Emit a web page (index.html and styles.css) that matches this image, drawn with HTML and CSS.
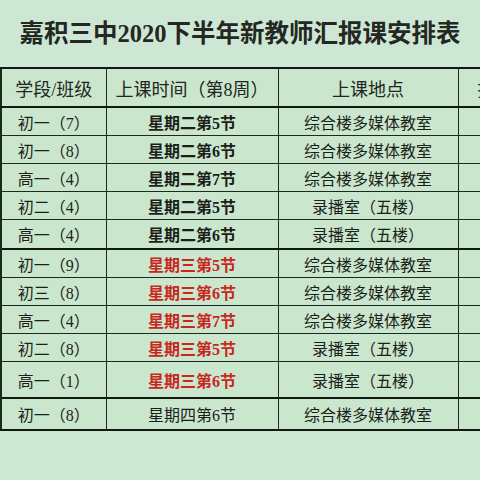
FILE: index.html
```html
<!DOCTYPE html>
<html lang="zh-CN">
<head>
<meta charset="utf-8">
<link rel="stylesheet" href="styles.css">
</head>
<body>
<div class="page">
  <h1 class="title">嘉积三中2020下半年新教师汇报课安排表</h1>
  <table class="sched">
    <colgroup>
      <col class="c1"><col class="c2"><col class="c3"><col class="c4">
    </colgroup>
    <thead>
      <tr class="head">
        <th>学段/班级</th><th>上课时间（第8周）</th><th>上课地点</th><th class="lead">授课教师</th>
      </tr>
    </thead>
    <tbody>
      <tr><td>初一（7）</td><td class="b">星期二第5节</td><td>综合楼多媒体教室</td><td></td></tr>
      <tr><td>初一（8）</td><td class="b">星期二第6节</td><td>综合楼多媒体教室</td><td></td></tr>
      <tr><td>高一（4）</td><td class="b">星期二第7节</td><td>综合楼多媒体教室</td><td></td></tr>
      <tr><td>初二（4）</td><td class="b">星期二第5节</td><td>录播室（五楼）</td><td></td></tr>
      <tr class="r30"><td>高一（4）</td><td class="b">星期二第6节</td><td>录播室（五楼）</td><td></td></tr>
      <tr class="thick"><td>初一（9）</td><td class="b red">星期三第5节</td><td>综合楼多媒体教室</td><td></td></tr>
      <tr><td>初三（8）</td><td class="b red">星期三第6节</td><td>综合楼多媒体教室</td><td></td></tr>
      <tr><td>高一（4）</td><td class="b red">星期三第7节</td><td>综合楼多媒体教室</td><td></td></tr>
      <tr><td>初二（8）</td><td class="b red">星期三第5节</td><td>录播室（五楼）</td><td></td></tr>
      <tr class="tall"><td>高一（1）</td><td class="b red">星期三第6节</td><td>录播室（五楼）</td><td></td></tr>
      <tr class="thick last"><td>初一（8）</td><td>星期四第6节</td><td>综合楼多媒体教室</td><td></td></tr>
    </tbody>
  </table>
</div>
</body>
</html>
```
FILE: styles.css
```css
html, body {
  margin: 0;
  padding: 0;
  background: #cee7d4;
  overflow: hidden;
}
.page {
  width: 480px;
  height: 480px;
  overflow: hidden;
}
.title {
  margin: 0;
  height: 67px;
  display: flex;
  align-items: center;
  justify-content: center;
  padding-bottom: 4px;
  box-sizing: border-box;
  font-family: "Liberation Serif", "Noto Sans CJK SC", serif;
  font-size: 24.5px;
  font-weight: 700;
  color: #232823;
  white-space: nowrap;
}
.sched {
  border-collapse: collapse;
  table-layout: fixed;
  width: 567px;
  margin-left: 0;
  font-family: "Liberation Serif", "Noto Sans CJK SC", serif;
  color: #1b1e1b;
  background: #cae6cc;
}
.c1 { width: 105px; }
.c2 { width: 172px; }
.c3 { width: 180px; }
.c4 { width: 110px; }
.sched th, .sched td {
  border: 1px solid #1c2a1e;
  padding: 0;
  text-align: center;
  white-space: nowrap;
  font-size: 16px;
  font-weight: 400;
  height: 27px;
}
.sched th {
  font-size: 18px;
  height: 37px;
  border-top: 2px solid #0f1a10;
  border-bottom: 2px solid #0f1a10;
  color: #222622;
}
.sched td:first-child, .sched th:first-child {
  border-left: 2px solid #1c2a1e;
}
.sched th.lead {
  text-align: left;
  padding-left: 19px;
}
.sched td.b {
  font-weight: 700;
}
.sched td.red {
  color: #c8261f;
}
.sched tr.r30 td { height: 28px; }
.sched tr.thick td { border-top: 2px solid #0f1a10; }
.sched tr.tall td { height: 35px; }
.sched tr.last td { border-bottom: 2px solid #0f1a10; height: 30px; }
```
